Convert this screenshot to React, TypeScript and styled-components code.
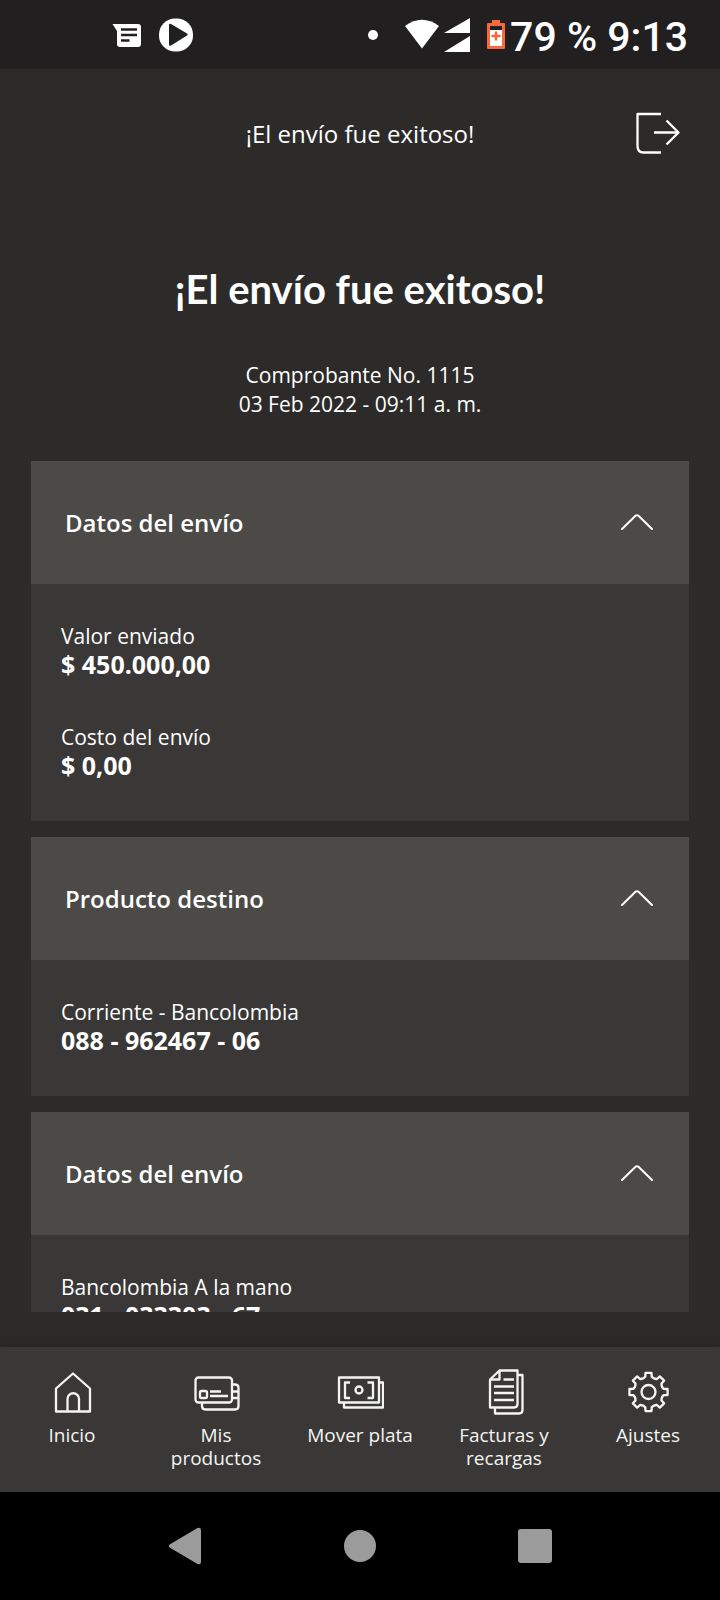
import React, { useState } from "react";
import styled, { createGlobalStyle } from "styled-components";

const GlobalStyle = createGlobalStyle`
  *, *::before, *::after { box-sizing: border-box; }
  body { margin: 0; background: #2c2b29; }
  h1, h2, p, dl, dt, dd { margin: 0; }
`;

const Screen = styled.div`
  display: flex;
  flex-direction: column;
  height: 100vh;
  background: #2c2b29;
  color: #ffffff;
  font-family: "Open Sans", "Noto Sans", sans-serif;
`;

const StatusBar = styled.div`
  display: flex;
  justify-content: space-between;
  align-items: flex-end;
  flex: none;
  height: 69px;
  padding: 0 32px 17px 112px;
  background: #221f20;
`;

const StatusGroup = styled.div<{ $gap: number }>`
  display: flex;
  align-items: flex-end;
  gap: ${(p) => p.$gap}px;
`;

const StatusText = styled.span`
  font-family: Roboto, sans-serif;
  font-size: 41px;
  font-weight: 500;
  line-height: 30px;
  white-space: nowrap;
`;

const Glyph = styled.svg`
  display: block;
  flex: none;
`;

const LineIcon = styled(Glyph)`
  fill: none;
  stroke: currentColor;
  stroke-width: 2.3;
  stroke-linejoin: round;
`;

const AppBar = styled.header`
  display: grid;
  grid-template-columns: 44px 1fr 44px;
  align-items: center;
  flex: none;
  height: 130px;
  padding: 0 40px;
`;

const AppBarTitle = styled.p`
  grid-column: 2;
  font-size: 24px;
  line-height: 32px;
  text-align: center;
`;

const IconButton = styled.button`
  display: block;
  padding: 0;
  border: 0;
  background: none;
  color: inherit;
  cursor: pointer;
`;

const Scroller = styled.main`
  flex: 1;
  min-height: 0;
  margin-bottom: 35px;
  padding: 0 31px;
  overflow-y: auto;
  scrollbar-width: none;
`;

const Hero = styled.section`
  padding: 66px 0 42px;
  text-align: center;
`;

const HeroTitle = styled.h1`
  margin-bottom: 48px;
  font-family: Lato, "Open Sans", sans-serif;
  font-size: 40px;
  font-weight: 700;
  line-height: 48px;
`;

const HeroLine = styled.p`
  font-size: 21px;
  line-height: 29px;
`;

const CardList = styled.div`
  display: flex;
  flex-direction: column;
  gap: 16px;
`;

const Card = styled.section`
  background: #393836;
`;

const CardToggle = styled.button`
  display: flex;
  justify-content: space-between;
  align-items: center;
  width: 100%;
  height: 123px;
  padding: 0 36px 0 34px;
  border: 0;
  background: #4b4a47;
  color: inherit;
  font-family: inherit;
  font-size: 24px;
  font-weight: 600;
  line-height: 32px;
  text-align: left;
  cursor: pointer;
`;

const Chevron = styled(LineIcon)<{ $open: boolean }>`
  stroke-width: 2;
  transform: rotate(${(p) => (p.$open ? 0 : 180)}deg);
`;

const Details = styled.dl`
  display: flex;
  flex-direction: column;
  gap: 46px;
  padding: 39px 30px 42px;
`;

const Label = styled.dt`
  font-size: 21px;
  line-height: 27px;
`;

const Value = styled.dd`
  font-size: 25px;
  font-weight: 700;
  line-height: 28px;
`;

const TabBar = styled.nav`
  display: grid;
  grid-template-columns: repeat(5, 1fr);
  flex: none;
  padding: 21px 0 22px;
  background: #393836;
  box-shadow: 0 -3px 8px rgba(0, 0, 0, 0.14);
`;

const Tab = styled.a`
  display: flex;
  flex-direction: column;
  align-items: center;
  gap: 8px;
  padding: 0 12px;
  color: #f4f4f3;
  font-size: 19px;
  line-height: 23px;
  text-align: center;
  text-decoration: none;
`;

const TabLabel = styled.span<{ $wrap?: boolean }>`
  width: ${(p) => (p.$wrap ? "min-content" : "auto")};
  min-width: ${(p) => (p.$wrap ? "96px" : "0")};
  white-space: ${(p) => (p.$wrap ? "normal" : "nowrap")};
`;

const SystemBar = styled.div`
  display: flex;
  justify-content: center;
  flex: none;
  height: 108px;
  background: #000000;
`;

const SystemKeys = styled.div`
  display: grid;
  grid-template-columns: repeat(3, 1fr);
  align-items: center;
  justify-items: center;
  width: 73%;
  color: #9b9b9b;
`;

type Entry = { label: string; value: string };

const cards: { title: string; entries: Entry[] }[] = [
  {
    title: "Datos del envío",
    entries: [
      { label: "Valor enviado", value: "$ 450.000,00" },
      { label: "Costo del envío", value: "$ 0,00" },
    ],
  },
  {
    title: "Producto destino",
    entries: [{ label: "Corriente - Bancolombia", value: "088 - 962467 - 06" }],
  },
  {
    title: "Datos del envío",
    entries: [{ label: "Bancolombia A la mano", value: "031 - 033303 - 67" }],
  },
];

// Eight-toothed gear outline with rounded valleys between the teeth.
const gearPath = (() => {
  const cx = 24.5;
  const cy = 24;
  const point = (deg: number, r: number) => {
    const a = (deg * Math.PI) / 180;
    return `${(cx + r * Math.cos(a)).toFixed(2)} ${(cy + r * Math.sin(a)).toFixed(2)}`;
  };
  let d = "";
  for (let i = 0; i < 8; i++) {
    const m = i * 45 - 90;
    d += `${i ? "L" : "M"}${point(m - 12, 15.5)} L${point(m - 9, 19.3)} L${point(m + 9, 19.3)} L${point(m + 12, 15.5)} Q${point(m + 22.5, 13.8)} ${point(m + 33, 15.5)} `;
  }
  return d + "Z";
})();

const HomeIcon = () => (
  <>
    <path d="M8 20.500 25 5.500 42 20.500V43.500H8Z" />
    <path d="M19.500 43.500V31a5.750 5.750 0 0 1 11.500 0v12.500" />
  </>
);

const CardsIcon = () => (
  <>
    <rect x="3.500" y="9.500" width="36.500" height="25" rx="3" />
    <path d="M10 34.500v3.500q0 3.500 3.500 3.500h29.500q3.500 0 3.500-3.500v-18q0-3.500-3.500-3.500H40M40 23.500H46.500M40 30H46.500" />
    <rect x="8" y="23" width="7" height="7" rx="1.500" />
    <path d="M18 23.500h11M18 28h18" />
  </>
);

const MoneyIcon = () => (
  <>
    <path d="M3 9.500h40v25H3Z" />
    <path d="M8 34.500v5h39V14.500h-4" />
    <path d="M14 14.500H9v15.500h5M31.500 14.500h5.500v15.500H31.500" />
    <circle cx="23" cy="22" r="3.500" />
  </>
);

const BillsIcon = () => (
  <>
    <path d="M10 11.500 19.500 2.500H37.500V36q0 3.500-3.500 3.500H10Z" />
    <path d="M10 11.500h9.500v-9" />
    <path d="M15 39.500v6H39q3.500 0 3.500-3.500V7h-5" />
    <path d="M23.500 11.500H34M14 18.500h20M14 25h20M14 32h20" />
  </>
);

const GearIcon = () => (
  <>
    <path d={gearPath} />
    <circle cx="24.500" cy="24" r="7" />
  </>
);

const tabs = [
  { label: "Inicio", Icon: HomeIcon },
  { label: "Mis productos", Icon: CardsIcon, wrap: true },
  { label: "Mover plata", Icon: MoneyIcon },
  { label: "Facturas y recargas", Icon: BillsIcon, wrap: true },
  { label: "Ajustes", Icon: GearIcon },
];

function DetailCard({ title, entries }: { title: string; entries: Entry[] }) {
  const [open, setOpen] = useState(true);
  return (
    <Card>
      <h2>
        <CardToggle type="button" aria-expanded={open} onClick={() => setOpen(!open)}>
          {title}
          <Chevron $open={open} width="32" height="18" viewBox="0 0 32 18" strokeLinecap="round" aria-hidden="true">
            <path d="M1 15 14.500 1.800Q16 .600 17.500 1.800L31 15" />
          </Chevron>
        </CardToggle>
      </h2>
      {open && (
        <Details>
          {entries.map((e) => (
            <div key={e.label}>
              <Label>{e.label}</Label>
              <Value>{e.value}</Value>
            </div>
          ))}
        </Details>
      )}
    </Card>
  );
}

export default function App() {
  return (
    <>
      <GlobalStyle />
      <Screen>
        <StatusBar>
          <StatusGroup $gap={17}>
            <Glyph width="30" height="34" viewBox="0 0 30 34" aria-hidden="true">
              <path fill="#fff" d="M.500 6H26q3 0 3 3V26q0 3-3 3H8q-3 0-3-3V13Z" />
              <path stroke="#221f20" strokeWidth="2.400" d="M9 11.500h16M9 17h16M9 22.500h8.500" />
            </Glyph>
            <Glyph width="34" height="34" viewBox="0 0 34 34" aria-hidden="true">
              <rect y=".5" width="34" height="33" rx="16" fill="#fff" />
              <path fill="#221f20" d="M10 7q0-2 2-1l16 9.500q1.500 1 0 2L12 27.500q-2 1-2-1Z" />
            </Glyph>
          </StatusGroup>
          <StatusGroup $gap={5}>
            <Glyph width="32" height="34" viewBox="0 0 32 34" aria-hidden="true">
              <circle cx="5" cy="17" r="5" fill="#fff" />
            </Glyph>
            <Glyph width="34" height="34" viewBox="0 0 34 34" aria-hidden="true">
              <path fill="#fff" d="M0 8Q17-4.500 34 8L17 30.500Z" />
            </Glyph>
            <Glyph width="38" height="34" viewBox="0 0 38 34" aria-hidden="true">
              <path fill="#fff" d="M26 0V15H0ZM26 18V34H0Z" />
            </Glyph>
            <Glyph width="18" height="34" viewBox="0 0 18 34" aria-hidden="true">
              <path fill="#f9683a" d="M5 2h8v3h4q1 0 1 1v24q0 1-1 1H1q-1 0-1-1V6q0-1 1-1h4Z" />
              <path fill="#221f20" d="M3 8h12v4H3Z" />
              <path fill="#fff" d="M3 12h12v16H3Z" />
              <path stroke="#f9683a" strokeWidth="2.500" d="M4.500 18h9M9 13.500v9" />
            </Glyph>
            <StatusText>79 % 9:13</StatusText>
          </StatusGroup>
        </StatusBar>

        <AppBar>
          <AppBarTitle>¡El envío fue exitoso!</AppBarTitle>
          <IconButton type="button" aria-label="Salir">
            <LineIcon width="44" height="44" viewBox="0 0 44 44" aria-hidden="true">
              <path d="M25 2H1.500V34q0 6.500 6 6.500H25M18 20.500H42.500M30.500 8.500 42.500 20.500 30.500 32.500" />
            </LineIcon>
          </IconButton>
        </AppBar>

        <Scroller>
          <Hero>
            <HeroTitle>¡El envío fue exitoso!</HeroTitle>
            <HeroLine>Comprobante No. 1115</HeroLine>
            <HeroLine>03 Feb 2022 - 09:11 a. m.</HeroLine>
          </Hero>
          <CardList>
            {cards.map((c, i) => (
              <DetailCard key={i} title={c.title} entries={c.entries} />
            ))}
          </CardList>
        </Scroller>

        <TabBar>
          {tabs.map(({ label, Icon, wrap }) => (
            <Tab key={label} href="#">
              <LineIcon width="48" height="48" viewBox="0 0 48 48" aria-hidden="true">
                <Icon />
              </LineIcon>
              <TabLabel $wrap={wrap}>{label}</TabLabel>
            </Tab>
          ))}
        </TabBar>

        <SystemBar>
          <SystemKeys>
            <IconButton type="button" aria-label="Atrás">
              <Glyph width="34" height="38" viewBox="0 0 34 38" aria-hidden="true">
                <path fill="currentColor" d="M2 17.300 29.500.900Q33 0 33 3V35q0 3-3.500 2.100L2 20.700q-2.500-1.700 0-3.400Z" />
              </Glyph>
            </IconButton>
            <IconButton type="button" aria-label="Inicio del sistema">
              <Glyph width="32" height="32" viewBox="0 0 32 32" aria-hidden="true">
                <circle cx="16" cy="16" r="16" fill="currentColor" />
              </Glyph>
            </IconButton>
            <IconButton type="button" aria-label="Recientes">
              <Glyph width="34" height="34" viewBox="0 0 34 34" aria-hidden="true">
                <rect width="34" height="34" rx="3" fill="currentColor" />
              </Glyph>
            </IconButton>
          </SystemKeys>
        </SystemBar>
      </Screen>
    </>
  );
}
